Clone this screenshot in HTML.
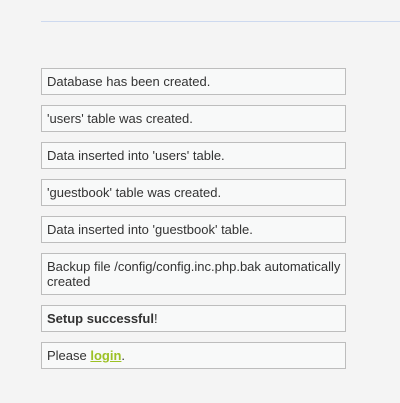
<!DOCTYPE html>
<html><head><style>
html,body{margin:0;padding:0;background:#f4f4f4;width:400px;height:403px;overflow:hidden;font-family:"Liberation Sans",sans-serif;font-size:13px;color:#333;}
.line{position:absolute;left:41px;top:21px;width:359px;height:1px;background:#cdd9ef;}
.box{position:absolute;left:41px;width:303px;background:#f8f9f9;border:1px solid #bdbdbd;padding:0 0 0 5px;box-sizing:border-box;width:305px;line-height:15px;}
a{color:#9cc124;font-weight:bold;text-decoration:underline;}
</style></head><body>
<div class="line"></div>
<div class="box" style="top:68px;height:27px;padding-top:5px">Database has been created.</div>
<div class="box" style="top:105px;height:27px;padding-top:5px">'users' table was created.</div>
<div class="box" style="top:142px;height:27px;padding-top:5px">Data inserted into 'users' table.</div>
<div class="box" style="top:179px;height:27px;padding-top:5px">'guestbook' table was created.</div>
<div class="box" style="top:216px;height:27px;padding-top:5px">Data inserted into 'guestbook' table.</div>
<div class="box" style="top:253px;height:42px;padding-top:5px">Backup file /config/config.inc.php.bak automatically created</div>
<div class="box" style="top:305px;height:27px;padding-top:5px"><b>Setup successful</b>!</div>
<div class="box" style="top:342px;height:27px;padding-top:5px">Please <a>login</a>.</div>
</body></html>
